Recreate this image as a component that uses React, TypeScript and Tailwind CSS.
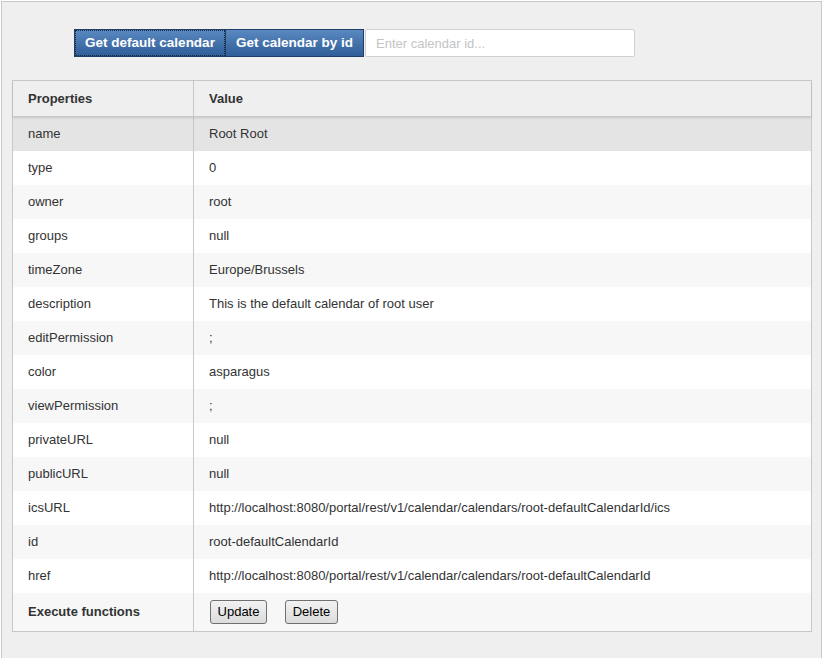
import React from "react";

const rows: [string, string][] = [
  ["name", "Root Root"],
  ["type", "0"],
  ["owner", "root"],
  ["groups", "null"],
  ["timeZone", "Europe/Brussels"],
  ["description", "This is the default calendar of root user"],
  ["editPermission", ";"],
  ["color", "asparagus"],
  ["viewPermission", ";"],
  ["privateURL", "null"],
  ["publicURL", "null"],
  ["icsURL", "http://localhost:8080/portal/rest/v1/calendar/calendars/root-defaultCalendarId/ics"],
  ["id", "root-defaultCalendarId"],
  ["href", "http://localhost:8080/portal/rest/v1/calendar/calendars/root-defaultCalendarId"],
];

export default function App() {
  return (
    <div
      className="w-[824px] h-[658px] bg-white pl-[1px] pt-[1px] overflow-hidden"
      style={{ fontFamily: '"Liberation Sans", Arial, sans-serif' }}
    >
      <div className="w-[821px] h-[680px] bg-[#efefef] border-l border-t border-r border-[#c8c8c8] pl-[10px] pr-[9px] pt-[27px]">
        <div className="flex items-center ml-[62px] h-[28px]">
          <button className="h-[28px] w-[152px] border border-[#1f3f6a] outline-1 outline-dotted outline-[#1a2a40] -outline-offset-2 bg-gradient-to-b from-[#5a88c0] to-[#2f5e98] text-white font-bold text-[13.5px] leading-none">
            Get default calendar
          </button>
          <button className="h-[28px] w-[138px] border border-[#1f3f6a] border-l-0 bg-gradient-to-b from-[#5a88c0] to-[#2f5e98] text-white font-bold text-[13.5px] leading-none">
            Get calendar by id
          </button>
          <input
            className="h-[28px] w-[270px] ml-[1px] bg-white border border-[#cfcfcf] rounded-[2px] px-[10px] text-[13px] text-[#333] placeholder:text-[#c4c4c4] outline-none"
            placeholder="Enter calendar id..."
          />
        </div>
        <div className="mt-[23px] w-[800px] border border-[#c8c8c8] bg-white text-[13px] text-[#333]">
          <div className="flex h-[36px] bg-[#efefef] border-b border-[#c8c8c8] shadow-[0_1px_2px_rgba(0,0,0,0.12)] font-bold text-[13px] relative">
            <div className="w-[181px] border-r border-[#c8c8c8] flex items-center pl-[15px]">Properties</div>
            <div className="flex-1 flex items-center pl-[15px]">Value</div>
          </div>
          {rows.map(([k, v], i) => (
            <div
              key={k}
              className={
                "flex h-[34px] " +
                (i === 0 ? "bg-[#e4e4e4]" : i % 2 === 1 ? "bg-white" : "bg-[#f7f7f7]")
              }
            >
              <div className="w-[181px] border-r border-[#c8c8c8] flex items-center pl-[15px]">{k}</div>
              <div className="flex-1 flex items-center pl-[15px]">{v}</div>
            </div>
          ))}
          <div className="flex h-[38px] bg-[#f7f7f7]">
            <div className="w-[181px] border-r border-[#c8c8c8] flex items-center pl-[15px] font-bold text-[13px]">
              Execute functions
            </div>
            <div className="flex-1 flex items-center pl-[16px] gap-[18px]">
              <button className="h-[24px] w-[57px] border border-[#707070] rounded-[3px] bg-gradient-to-b from-[#f2f2f2] to-[#dcdcdc] text-[13px] text-black">
                Update
              </button>
              <button className="h-[24px] w-[53px] border border-[#707070] rounded-[3px] bg-gradient-to-b from-[#f2f2f2] to-[#dcdcdc] text-[13px] text-black">
                Delete
              </button>
            </div>
          </div>
        </div>
      </div>
    </div>
  );
}
